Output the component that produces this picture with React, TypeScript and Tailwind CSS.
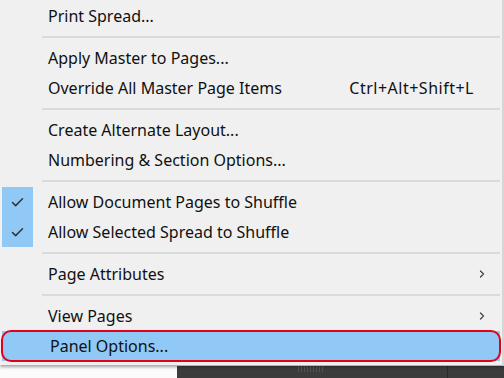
import { Check, ChevronRight } from 'lucide-react';

type Item = {
  label: string;
  shortcut?: string;
  checked?: boolean;
  submenu?: boolean;
  active?: boolean;
};

const groups: Item[][] = [
  [{ label: 'Print Spread...' }],
  [
    { label: 'Apply Master to Pages...' },
    { label: 'Override All Master Page Items', shortcut: 'Ctrl+Alt+Shift+L' },
  ],
  [{ label: 'Create Alternate Layout...' }, { label: 'Numbering & Section Options...' }],
  [
    { label: 'Allow Document Pages to Shuffle', checked: true },
    { label: 'Allow Selected Spread to Shuffle', checked: true },
  ],
  [{ label: 'Page Attributes', submenu: true }],
  [{ label: 'View Pages', submenu: true }, { label: 'Panel Options...', active: true }],
];

const Row = ({ item }: { item: Item }) => (
  <div
    className={
      'relative h-[30px] flex items-center pl-[48px] pr-[14px] ' +
      (item.active ? 'bg-[#90c8f6] mx-[2px] pl-[46px] pr-[12px]' : '')
    }
  >
    {item.checked && (
      <div className="absolute left-[2px] top-0 h-full w-[31px] bg-[#90c8f6] flex items-center justify-center">
        <Check size={15} strokeWidth={2.4} className="text-[#333]" />
      </div>
    )}
    {item.active && (
      <div className="absolute -left-[1px] -right-[1px] -top-[1px] -bottom-[1px] rounded-[10px] border-2 border-[#e3001b]" />
    )}
    <span className="flex-1">{item.label}</span>
    {item.shortcut && <span className="mr-[14px] tracking-[0.5px]">{item.shortcut}</span>}
    {item.submenu && <ChevronRight size={12} strokeWidth={2.6} className="text-[#444]" />}
  </div>
);

export default function App() {
  return (
    <div
      className="w-[504px] h-[378px] overflow-hidden bg-[#fafafa] text-[16px] text-[#111] relative"
      style={{ fontFamily: '"Noto Sans", "Open Sans", sans-serif' }}
    >
      <div className="relative z-10 w-[504px] bg-[#f0f0f0] border-r-2 border-[#d6d6d6] pt-px pb-[4px] shadow-[0_2px_3px_rgba(0,0,0,0.35)]">
        {groups.map((g, gi) => (
          <div key={gi}>
            {gi > 0 && (
              <div className="h-[12px] flex items-center pl-[42px] pr-[2px]">
                <div className="h-[2px] w-full bg-[#dadada]" />
              </div>
            )}
            {g.map((item) => (
              <Row key={item.label} item={item} />
            ))}
          </div>
        ))}
      </div>
      <div className="flex h-[20px] pt-[1px]">
        <div className="w-[177px] bg-[#fbfbfb]" />
        <div className="flex-1 bg-[#3c3c3c] flex">
          <div className="w-[121px]" />
          <div className="w-[27px] h-[6px] bg-[repeating-linear-gradient(90deg,#555_0_1px,#3c3c3c_1px_3px)]" />
          <div className="flex-1" />
          <div className="w-px bg-[#2a2a2a]" />
          <div className="w-[56px]" />
        </div>
      </div>
    </div>
  );
}
